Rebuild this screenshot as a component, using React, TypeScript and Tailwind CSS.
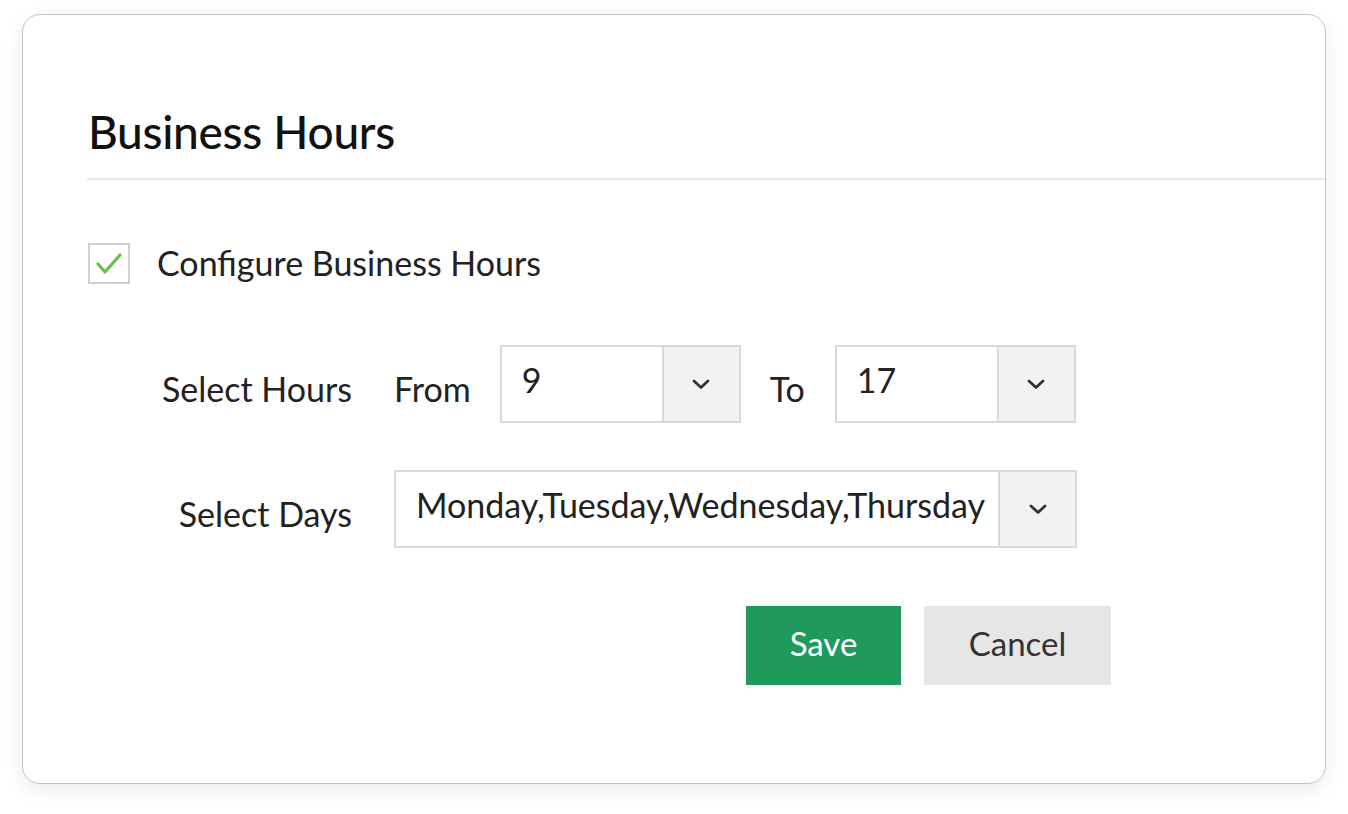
import React from "react";

function Chevron() {
  return (
    <svg className="w-[20px] h-[12px]" viewBox="0 0 20 12" fill="none" stroke="#333" strokeWidth={2.8}>
      <path d="M3 3l7 6.5L17 3" strokeLinecap="round" strokeLinejoin="round" />
    </svg>
  );
}

function Select({ value, width, textWidth }: { value: string; width: string; textWidth: string }) {
  return (
    <div className={`flex h-[78px] border-2 border-[#d9d9d9] bg-white ${width}`}>
      <div className={`flex items-center pl-[20px] ${textWidth} text-[34px] leading-none text-[#222] pb-[8px]`}>{value}</div>
      <div className="flex-1 flex items-center justify-center bg-[#f2f2f2] border-l-2 border-[#d9d9d9]">
        <Chevron />
      </div>
    </div>
  );
}

export default function App() {
  return (
    <div className="min-h-screen bg-white pl-[22px] pt-[14px]" style={{ fontFamily: "Lato, 'Noto Sans', sans-serif" }}>
      <div className="w-[1304px] h-[770px] bg-white border border-[#c4c4c4] rounded-[18px] shadow-[0_6px_20px_rgba(0,0,0,0.08)] pt-[94px]">
        {/* Heading */}
        <h1 className="pl-[65px] text-[46px] leading-none font-medium text-[#111] tracking-[-0.3px]">Business Hours</h1>
        <div className="ml-[64px] mt-[23px] h-[2px] bg-[#e6e6e6]" />

        {/* Checkbox */}
        <div className="flex items-center pl-[65px] mt-[63px]">
          <div className="w-[42px] h-[41px] border-2 border-[#cfcfcf] flex items-center justify-center bg-white">
            <svg className="w-[30px] h-[24px]" viewBox="0 0 30 24" fill="none" stroke="#6cbf4a" strokeWidth={3.2}>
              <path d="M4 12l7 8L26 3" strokeLinecap="round" strokeLinejoin="round" />
            </svg>
          </div>
          <span className="ml-[27px] text-[34px] leading-none text-[#222] pb-[2px]">Configure Business Hours</span>
        </div>

        {/* Hours */}
        <div className="flex items-center mt-[61px]">
          <div className="w-[329px] text-right text-[34px] leading-none text-[#222] pt-[10px]">Select Hours</div>
          <div className="ml-[42px] text-[34px] leading-none text-[#222] pt-[10px]">From</div>
          <div className="ml-[29px]">
            <Select value="9" width="w-[241px]" textWidth="w-[160px]" />
          </div>
          <div className="ml-[29px] w-[65px] text-[34px] leading-none text-[#222] pt-[10px]">To</div>
          <Select value="17" width="w-[241px]" textWidth="w-[160px]" />
        </div>

        {/* Days */}
        <div className="flex items-center mt-[47px]">
          <div className="w-[329px] text-right text-[34px] leading-none text-[#222] pt-[10px]">Select Days</div>
          <div className="ml-[42px]">
            <Select value="Monday,Tuesday,Wednesday,Thursday" width="w-[683px]" textWidth="w-[602px] whitespace-nowrap overflow-hidden" />
          </div>
        </div>

        {/* Buttons */}
        <div className="flex mt-[58px] pl-[723px] gap-[23px]">
          <button className="w-[155px] h-[79px] bg-[#1f9a5c] text-white text-[33px] pb-[4px]">Save</button>
          <button className="w-[187px] h-[79px] bg-[#e6e6e6] text-[#333] text-[33px] pb-[4px]">Cancel</button>
        </div>
      </div>
    </div>
  );
}
